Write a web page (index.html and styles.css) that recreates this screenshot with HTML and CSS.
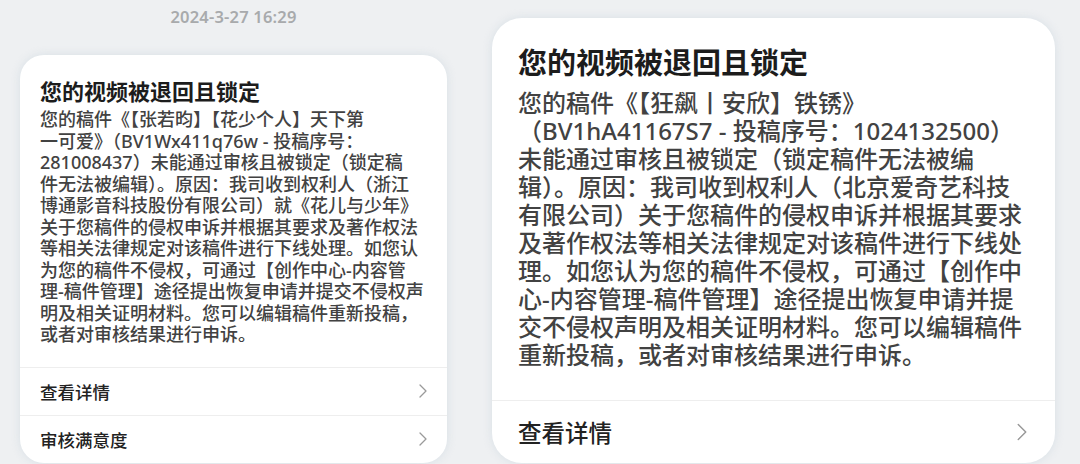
FILE: index.html
```html
<!DOCTYPE html>
<html lang="zh-CN">
<head>
<meta charset="utf-8">
<title>审核通知</title>
<link rel="stylesheet" href="styles.css">
</head>
<body>
<div class="page">
  <div class="col-left">
    <div class="date">2024-3-27 16:29</div>
    <div class="card card-sm">
      <div class="card-body">
        <h2 class="title">您的视频被退回且锁定</h2>
        <p class="text">您的稿件《【张若昀】【花少个人】天下第<br>一可爱》（BV1Wx411q76w - 投稿序号：<br>281008437）未能通过审核且被锁定（锁定稿<br>件无法被编辑）。原因：我司收到权利人（浙江<br>博通影音科技股份有限公司）就《花儿与少年》<br>关于您稿件的侵权申诉并根据其要求及著作权法<br>等相关法律规定对该稿件进行下线处理。如您认<br>为您的稿件不侵权，可通过【创作中心-内容管<br>理-稿件管理】途径提出恢复申请并提交不侵权声<br>明及相关证明材料。您可以编辑稿件重新投稿，<br>或者对审核结果进行申诉。</p>
      </div>
      <div class="row">
        <span>查看详情</span>
        <svg class="chev" viewBox="0 0 8 14"><path d="M1 1 L7 7 L1 13" fill="none" stroke="currentColor" stroke-width="1.3" stroke-linecap="round" stroke-linejoin="round"/></svg>
      </div>
      <div class="row">
        <span>审核满意度</span>
        <svg class="chev" viewBox="0 0 8 14"><path d="M1 1 L7 7 L1 13" fill="none" stroke="currentColor" stroke-width="1.3" stroke-linecap="round" stroke-linejoin="round"/></svg>
      </div>
    </div>
  </div>
  <div class="card card-lg">
    <div class="card-body">
      <h2 class="title">您的视频被退回且锁定</h2>
      <p class="text">您的稿件《【狂飙丨安欣】铁锈》<br>（BV1hA41167S7 - 投稿序号：1024132500）<br>未能通过审核且被锁定（锁定稿件无法被编<br>辑）。原因：我司收到权利人（北京爱奇艺科技<br>有限公司）关于您稿件的侵权申诉并根据其要求<br>及著作权法等相关法律规定对该稿件进行下线处<br>理。如您认为您的稿件不侵权，可通过【创作中<br>心-内容管理-稿件管理】途径提出恢复申请并提<br>交不侵权声明及相关证明材料。您可以编辑稿件<br>重新投稿，或者对审核结果进行申诉。</p>
    </div>
    <div class="row">
      <span>查看详情</span>
      <svg class="chev" viewBox="0 0 8 14"><path d="M1 1 L7 7 L1 13" fill="none" stroke="currentColor" stroke-width="1.2" stroke-linecap="round" stroke-linejoin="round"/></svg>
    </div>
  </div>
</div>
</body>
</html>
```
FILE: styles.css
```css
* { box-sizing: border-box; }
html, body {
  margin: 0;
  padding: 0;
  width: 1080px;
  height: 464px;
  overflow: hidden;
  background: #eef0f2;
  font-family: "Noto Sans", "Noto Sans CJK SC", sans-serif;
}
.page {
  display: flex;
  align-items: flex-start;
  padding-left: 20px;
  gap: 45px;
}
.col-left {
  width: 427px;
  display: flex;
  flex-direction: column;
}
.date {
  height: 55px;
  padding-top: 6px;
  text-align: center;
  font-size: 16.5px;
  letter-spacing: 0.2px;
  line-height: 22px;
  font-weight: 600;
  color: #a8aaac;
}
.card {
  background: #fff;
  box-shadow: 0 0 10px rgba(190, 205, 215, 0.45);
  overflow: hidden;
}
.card-sm {
  border-radius: 24px;
}
.card-lg {
  width: 563px;
  margin-top: 18px;
  border-radius: 30px;
}
.title {
  margin: 0;
  font-weight: 700;
  color: #1c1c1c;
}
.text {
  margin: 0;
  white-space: nowrap;
  color: #424242;
  font-weight: 500;
}
.row {
  display: flex;
  align-items: center;
  justify-content: space-between;
  border-top: 1px solid #eeeeee;
  color: #222;
  font-weight: 500;
}
.chev { color: #9a9a9a; }

/* small (left) card */
.card-sm .card-body { padding: 22px 20px 21px 20px; }
.card-sm .title { font-size: 22px; line-height: 28px; margin-bottom: 4px; }
.card-sm .text { font-size: 18px; line-height: 21.5px; }
.card-sm .row { height: 48px; padding: 0 20px 0 20px; font-size: 17.5px; }
.card-sm .chev { width: 8px; height: 14px; }

/* large (right) card */
.card-lg .card-body { padding: 26px 26px 31px 26px; }
.card-lg .title { font-size: 29px; line-height: 38px; margin-bottom: 7px; }
.card-lg .text { font-size: 24px; line-height: 28px; }
.card-lg .row { height: 63px; padding: 0 28px 0 26px; font-size: 23.5px; }
.card-lg .chev { width: 10px; height: 18px; }
```
